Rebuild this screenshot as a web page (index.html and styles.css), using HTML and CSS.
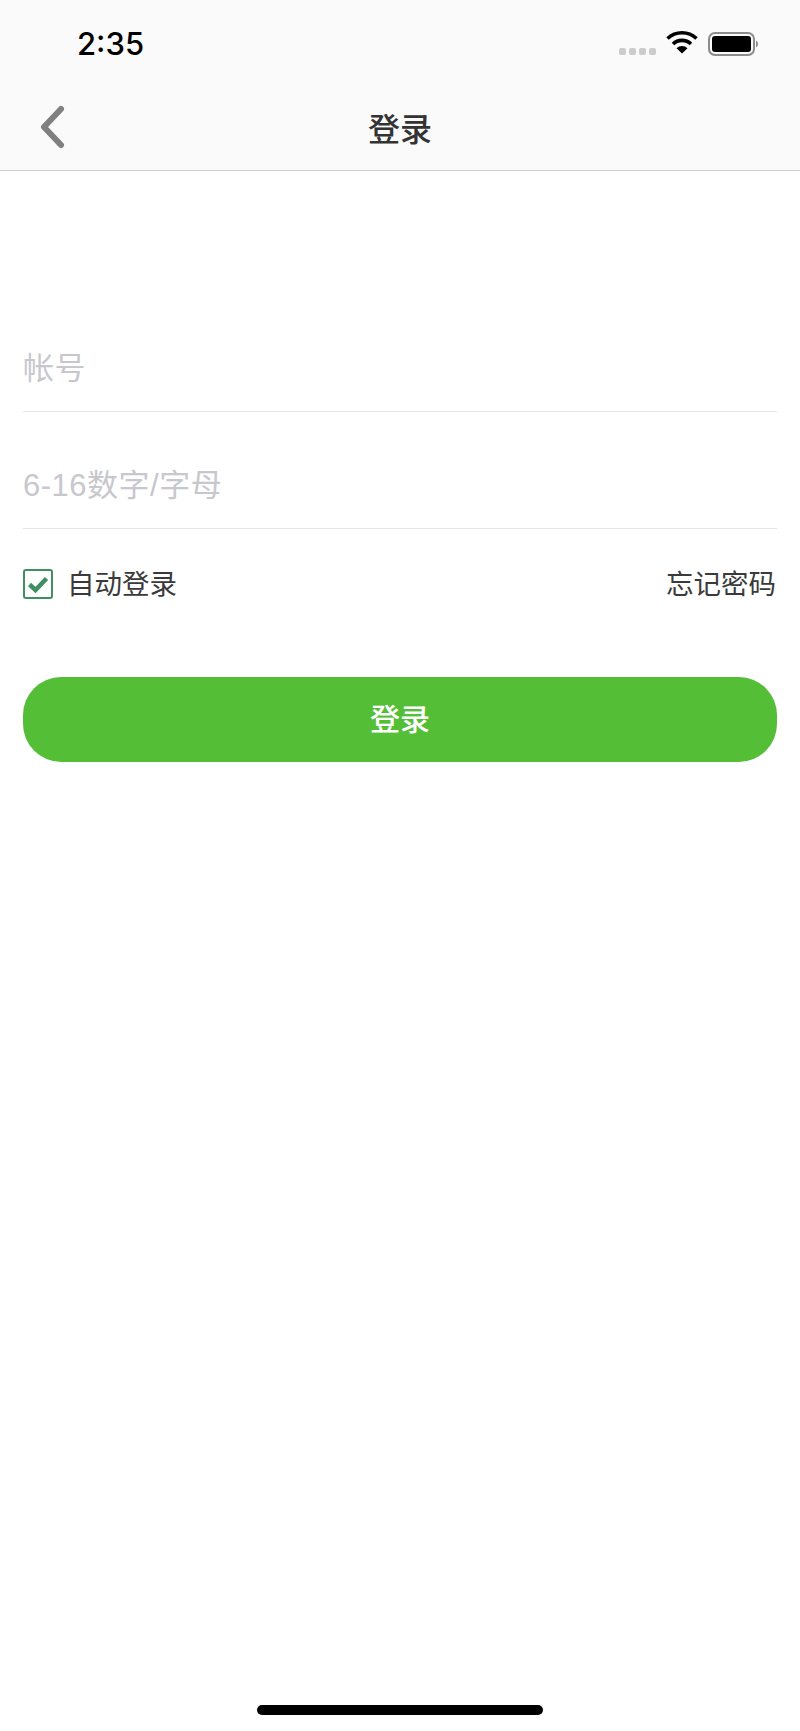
FILE: index.html
```html
<!DOCTYPE html>
<html lang="zh">
<head>
	<title>登录</title>
	<meta charset="utf-8" />
	<link rel="stylesheet" href="styles.css">
</head>
<body>
	<div class="page">
		<header class="top">
			<div class="status">
				<span class="time">2:35</span>
				<div class="status-icons">
					<div class="signal"><i></i><i></i><i></i><i></i></div>
					<svg class="wifi" viewBox="0 0 32 24" width="32" height="24">
						<path d="M1.5 8.5 A21 21 0 0 1 30.5 8.5" fill="none" stroke="#000" stroke-width="3.6" />
						<path d="M7 14 A13 13 0 0 1 25 14" fill="none" stroke="#000" stroke-width="3.6" />
						<path d="M16 23.5 L10.500 18.2 A8 8 0 0 1 21.500 18.2 Z" fill="#000" />
					</svg>
					<svg class="battery" viewBox="0 0 52 24" width="52" height="24">
						<rect x="1" y="1" width="45" height="22" rx="6" fill="none" stroke="#8c8c8c" stroke-width="2" />
						<rect x="4" y="4" width="39" height="16" rx="3" fill="#000" />
						<path d="M48 8.500 A4 4 0 0 1 48 15.500 Z" fill="#8c8c8c" />
					</svg>
				</div>
			</div>
			<nav class="nav">
				<svg class="back" viewBox="0 0 26 44" width="26" height="44">
					<path d="M22 4 L5 22 L22 40" fill="none" stroke="#808080" stroke-width="6" stroke-linecap="round" stroke-linejoin="round" />
				</svg>
				<h1 class="nav-title">登录</h1>
			</nav>
		</header>

		<main class="form">
			<div class="field field-first"><span class="hint">帐号</span></div>
			<div class="field"><span class="hint">6-16数字/字母</span></div>
			<div class="options">
				<label class="auto">
					<span class="check">
						<svg viewBox="0 0 24 24" width="24" height="24">
							<path d="M3.500 12.500 L9.500 18 L20.500 6.500" fill="none" stroke="#3f8f63" stroke-width="4.500" />
						</svg>
					</span>
					<span class="label-text">自动登录</span>
				</label>
				<span class="label-text forgot">忘记密码</span>
			</div>
			<button class="submit">登录</button>
		</main>

		<div class="home-bar"></div>
	</div>
</body>
</html>
```

FILE: styles.css
```css
* { box-sizing: border-box; }
body {
	margin: 0;
	background: #fff;
	font-family: "Noto Sans CJK SC", "Liberation Sans", sans-serif;
	color: #333;
}
.page {
	display: flex;
	flex-direction: column;
	min-height: 1731px;
}

/* status bar + nav */
.top {
	background: #fafafa;
	border-bottom: 1px solid #cfcfcf;
	height: 171px;
}
.status {
	display: flex;
	justify-content: space-between;
	align-items: center;
	height: 87px;
	padding: 0 40px 0 77px;
}
.time {
	font-family: Inter, "Liberation Sans", sans-serif;
	font-size: 31px;
	font-weight: 500;
	color: #000;
}
.status-icons {
	display: flex;
	align-items: center;
	gap: 10px;
}
.signal {
	display: flex;
	gap: 3px;
	margin-top: 16px;
}
.signal i {
	display: block;
	width: 7px;
	height: 7px;
	border-radius: 2px;
	background: #ccc;
}
.wifi { margin-top: -3px; }
.nav {
	position: relative;
	display: flex;
	align-items: center;
	justify-content: center;
	height: 83px;
	padding-bottom: 4px;
}
.back {
	position: absolute;
	left: 39px;
	top: 18px;
}
.nav-title {
	margin: 0;
	font-size: 32px;
	font-weight: 500;
	color: #333;
}

/* form */
.form {
	display: flex;
	flex-direction: column;
	padding: 0 23px;
}
.field {
	display: flex;
	align-items: center;
	height: 117px;
	padding-top: 24px;
	border-bottom: 1px solid #e6e6e6;
}
.field-first { margin-top: 124px; }
.hint {
	font-family: "Liberation Sans", "Noto Sans CJK SC", sans-serif;
	font-size: 31px;
	letter-spacing: 0.5px;
	color: #c7c7cd;
}
.options {
	display: flex;
	justify-content: space-between;
	align-items: center;
	height: 56px;
	margin-top: 27px;
	font-size: 27.5px;
	color: #3a3a3a;
}
.auto {
	display: flex;
	align-items: center;
	gap: 14px;
}
.check {
	display: flex;
	align-items: center;
	justify-content: center;
	width: 30px;
	height: 30px;
	border: 2px solid #3f8f63;
	border-radius: 3px;
}
.label-text { margin-bottom: 4px; }
.forgot { margin-right: 1px; }
.submit {
	height: 85px;
	margin-top: 65px;
	padding-bottom: 6px;
	border: none;
	border-radius: 38px;
	background: #54bf36;
	color: #fff;
	font-family: inherit;
	font-size: 30px;
	font-weight: 500;
}

.home-bar {
	width: 286px;
	height: 10px;
	margin: auto auto 16px;
	border-radius: 5px;
	background: #000;
}
```
